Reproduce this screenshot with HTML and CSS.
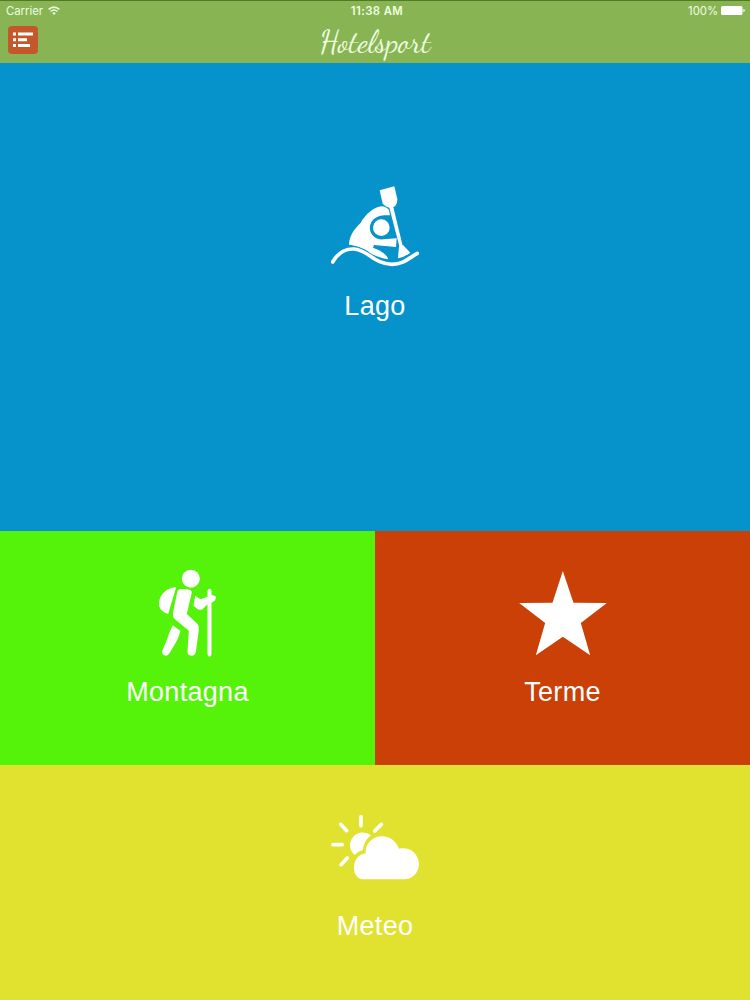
FILE: index.html
```
<!DOCTYPE html>
<html lang="it">
	<head>
		<meta charset="UTF-8" />
		<meta name="viewport" content="width=device-width, initial-scale=1.0" />
		<title>Hotelsport</title>
		<link rel="stylesheet" href="styles.css">
	</head>
	<body>
		<header class="header">
			<div class="status-bar">
				<div class="status-bar__left">
					<span>Carrier</span>
					<svg class="wifi" viewBox="0 0 12 9" fill="none" stroke="currentColor" stroke-width="1.5">
						<path d="M.6 3.4Q6-1.2 11.4 3.4M2.6 5.5Q6 2.6 9.4 5.5" />
						<path d="M4.2 7Q6 5.4 7.8 7L6 8.9Z" fill="currentColor" stroke="none" />
					</svg>
				</div>
				<div class="status-bar__time">11:38 AM</div>
				<div class="status-bar__right">
					<span>100%</span>
					<svg class="battery" viewBox="0 0 24 9" fill="currentColor">
						<rect width="21.5" height="9" rx="1.5" />
						<path d="M22.3 3Q23.8 3.4 23.8 4.5T22.3 6Z" />
					</svg>
				</div>
			</div>
			<nav class="nav-bar">
				<button class="menu-button" aria-label="Menu">
					<svg viewBox="0 0 30 28" fill="currentColor">
						<path d="M5 6.5h3v3H5zM10 6.5h15v3H10zM5 12.2h3v3H5zM10 12.2h9v3h-9zM5 18h3v3H5zM10 18h12v3H10z" />
					</svg>
				</button>
				<h1 class="nav-bar__title">Hotelsport</h1>
			</nav>
		</header>

		<main class="tiles">
			<a class="tile tile--lago">
				<svg class="tile__icon" viewBox="33 24 264 264" fill="currentColor">
					<path d="M179 46L223 34L232 73Q232 86 226 93Q220 98 207 98Q196 96 188 86Z" />
					<path d="M207 94L219 92L248 212L238 214Z" />
					<path d="M237 214L249 210L271 233Q257 245 234 250Z" />
					<path d="M87 209C88 180 105 161 121 145C137 117 163 95 185 94Q197 94 207 105L210 121C188 119 164 123 154 142C143 163 154 184 173 191Q180 194 190 193L230 190L228 216L162 210L159 218C177 224 200 236 205 253C180 249 159 242 141 227C121 214 103 212 87 209Z" />
					<circle cx="184" cy="158" r="25" />
					<path d="M38 261C54 233 78 221 102 222C143 224 163 268 216 268C251 268 268 248 292 235" fill="none" stroke="currentColor" stroke-width="11" stroke-linecap="round" />
				</svg>
				<span class="tile__label">Lago</span>
			</a>
			<a class="tile tile--montagna">
				<svg class="tile__icon" viewBox="100.5 147 264 264" fill="currentColor">
					<circle cx="241" cy="176" r="27" />
					<path d="M197 202L173 282Q151 276 146 258C142 231 162 204 197 202Z" />
					<path d="M207 208Q223 205 239 210Q246 213 243 222L229 282L258 309Q266 316 265 329L256 396Q254 407 243 407Q230 406 231 393L235 332L196 300Q184 291 188 276L200 217Q202 210 207 208Z" />
					<path d="M187 316L210 333Q203 360 183 389Q175 405 167 407Q154 407 155 394Q168 365 177 337Z" />
					<path d="M254 227L270 238L291 230V212Q292 206 298 206Q303 207 303 213V224L315 229Q319 235 313 242L303 248V403Q303 409 297 410Q291 409 291 403V253L276 268Q269 272 260 266L249 257Z" />
				</svg>
				<span class="tile__label">Montagna</span>
			</a>
			<a class="tile tile--terme">
				<svg class="tile__icon" viewBox="55.5 27 264 264" fill="currentColor">
					<path d="M187 33L219 128L319 129L241 189L269 286L187 230L106 286L134 189L56 129L156 128Z" />
				</svg>
				<span class="tile__label">Terme</span>
			</a>
			<a class="tile tile--meteo">
				<svg class="tile__icon" viewBox="33 -6 264 264" fill="currentColor">
					<path d="M123 35V62M62 58L80 77M184 58L164 78M39 119H66M82 159L63 179" fill="none" stroke="currentColor" stroke-width="11" stroke-linecap="round" />
					<path d="M104 150A38 38 0 1 1 153 91Q132 106 128 135Q113 139 104 150Z" />
					<path d="M133 223C114 223 102 210 102 188C102 162 119 147 137 145C134 117 158 94 185 94C211 94 229 110 237 131C271 123 297 149 297 177C297 203 276 223 252 223Z" />
				</svg>
				<span class="tile__label">Meteo</span>
			</a>
		</main>
	</body>
</html>
```

FILE: styles.css
```
* {
	box-sizing: border-box;
}

body {
	display: flex;
	flex-direction: column;
	height: 1000px;
	margin: 0;
	font-family: "Liberation Sans", Arial, sans-serif;
}

/* Header */
.header {
	height: 63px;
	border-top: 1px solid #517a28;
	background-color: #88b454;
	color: #efffe0;
}

.status-bar {
	display: grid;
	grid-template-columns: 1fr auto 1fr;
	align-items: center;
	height: 19px;
	padding: 0 5px 0 6px;
	font-family: Inter, "Liberation Sans", sans-serif;
	font-size: 11.3px;
}

.status-bar__left,
.status-bar__right {
	display: flex;
	align-items: center;
	gap: 5px;
}

.status-bar__right {
	justify-content: flex-end;
	gap: 3px;
}

.status-bar__time {
	padding-left: 3px;
	font-weight: 600;
	letter-spacing: 0.4px;
}

.wifi {
	width: 12px;
	height: 9px;
}

.battery {
	width: 24px;
	height: 9px;
	color: #fff;
}

.nav-bar {
	display: grid;
	grid-template-columns: 30px 1fr 30px;
	align-items: center;
	height: 43px;
	padding: 0 8px;
}

.menu-button {
	width: 30px;
	height: 28px;
	margin-top: -4px;
	padding: 0;
	border: 0;
	border-radius: 4px;
	background-color: #c4582b;
	color: #fff;
}

.menu-button svg {
	display: block;
}

.nav-bar__title {
	margin: 0;
	font-family: "Dancing Script", cursive;
	font-size: 31px;
	font-weight: 400;
	line-height: 36px;
	text-align: center;
}

/* Tiles */
.tiles {
	flex: 1;
	display: grid;
	grid-template-columns: 1fr 1fr;
	grid-template-rows: 468px 234px 1fr;
}

.tile {
	display: flex;
	flex-direction: column;
	align-items: center;
	padding-top: 38px;
	color: #fff;
}

.tile--lago {
	grid-column: 1 / -1;
	padding-top: 120px;
	background-color: #0693cb;
}

.tile--montagna {
	background-color: #55f20a;
}

.tile--terme {
	background-color: #ca4007;
}

.tile--meteo {
	grid-column: 1 / -1;
	background-color: #e1e22f;
}

.tile__icon {
	width: 88px;
	height: 88px;
}

.tile__label {
	margin-top: 19px;
	font-size: 27px;
	line-height: 32px;
	letter-spacing: 0.3px;
}
```
